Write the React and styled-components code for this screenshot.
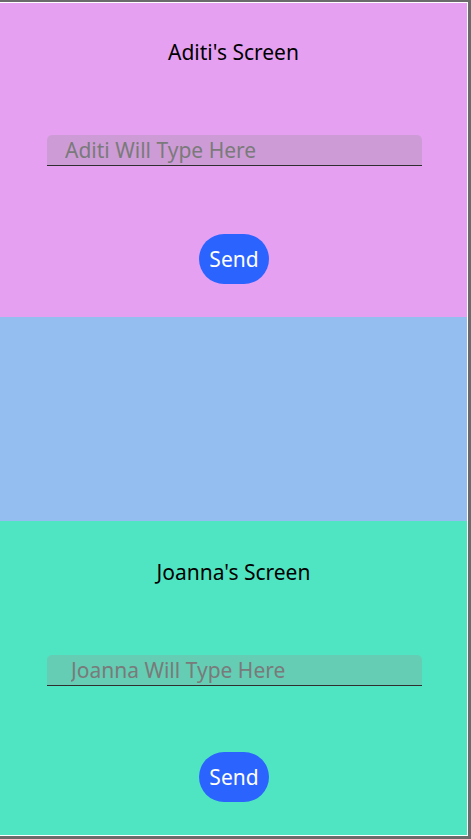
import React from 'react'
import styled, {createGlobalStyle} from 'styled-components'

const GlobalStyle = createGlobalStyle`
  html, body {
    margin: 0;
    padding: 0;
    background: #ffffff;
  }
  body {
    font-family: 'Noto Sans', 'Open Sans', sans-serif;
  }
`

const screens = [
  {name: 'Aditi', bg: '#e6a0f2', top: 35, gap: 68, pad: 18},
  {name: 'Joanna', bg: '#50e5c2', top: 37, gap: 66, pad: 24},
]

const ChatScreen = ({name, bg, top, gap, pad}) => (
  <Section bg={bg} top={top}>
    <Title>{name}'s Screen</Title>
    <Field placeholder={`${name} Will Type Here`} pad={pad} />
    <SendButton gap={gap}>Send</SendButton>
  </Section>
)

const App = () => (
  <>
    <GlobalStyle />
    <Frame>
      <Inner>
        <ChatScreen {...screens[0]} />
        <Middle />
        <ChatScreen {...screens[1]} />
      </Inner>
    </Frame>
  </>
)

const Frame = styled.div`
  width: 471px;
  height: 839px;
  box-sizing: border-box;
  border-top: 2px solid #6b6b6b;
  border-right: 3px solid #6b6b6b;
  border-bottom: 3px solid #6b6b6b;
`

const Inner = styled.div`
  height: 100%;
  box-sizing: border-box;
  border-top: 1px solid #ffffff;
  border-right: 1px solid #ffffff;
  border-bottom: 1px solid #ffffff;
  display: flex;
  flex-direction: column;
`

const Section = styled.div`
  height: 314px;
  background: ${({bg}) => bg};
  display: flex;
  flex-direction: column;
  align-items: center;
  padding-top: ${({top}) => top}px;
  box-sizing: border-box;
`

const Middle = styled.div`
  height: 204px;
  background: #94bef0;
`

const Title = styled.div`
  font-size: 21px;
  line-height: 28px;
  color: #000000;
`

const Field = styled.input`
  margin-top: 69px;
  margin-left: 2px;
  width: 375px;
  height: 31px;
  box-sizing: border-box;
  border: none;
  border-bottom: 1px solid #2e2e2e;
  border-radius: 5px 5px 0 0;
  background: rgba(150, 150, 150, 0.3);
  padding: 0 0 0 ${({pad}) => pad}px;
  font-family: inherit;
  font-size: 21px;
  color: #333333;
  outline: none;

  &::placeholder {
    color: #7a7a7a;
  }
`

const SendButton = styled.button`
  margin-top: ${({gap}) => gap}px;
  margin-left: 1px;
  width: 70px;
  height: 50px;
  border: none;
  border-radius: 25px;
  background: #2b63ff;
  color: #ffffff;
  font-family: inherit;
  font-size: 21px;
  padding: 0;
`

export default App
